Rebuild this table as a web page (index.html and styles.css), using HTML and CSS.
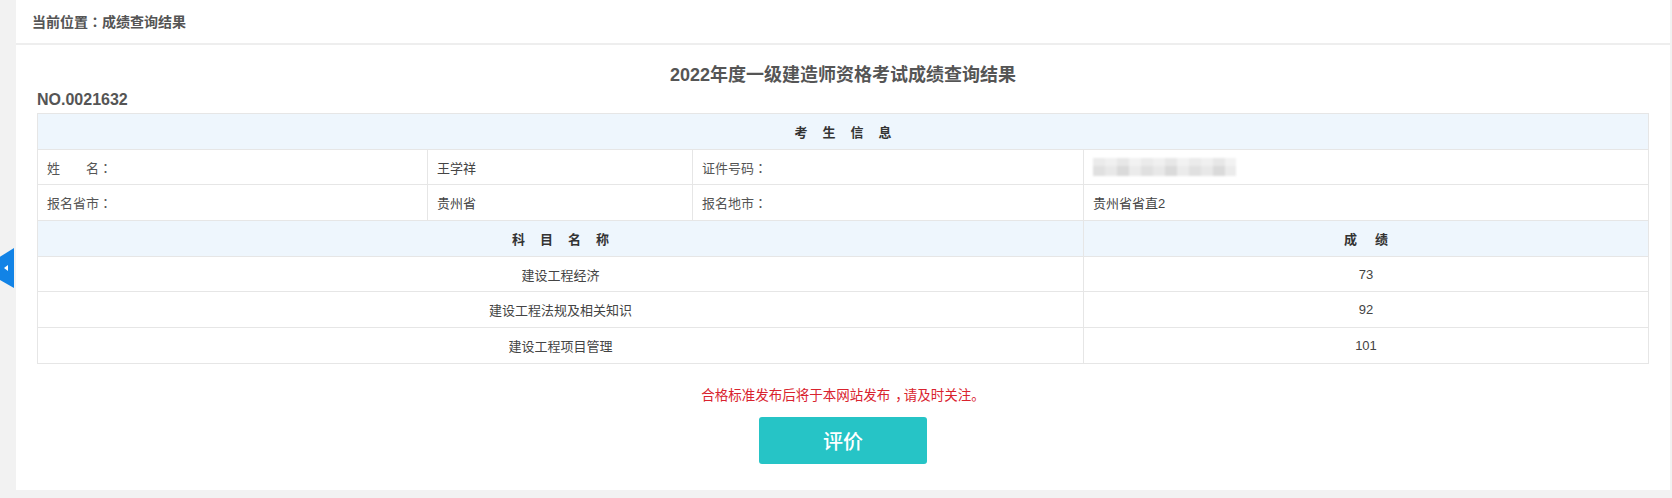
FILE: index.html
```html
<!DOCTYPE html>
<html lang="zh-CN">
<head>
<meta charset="utf-8">
<title>成绩查询结果</title>
<link rel="stylesheet" href="styles.css">
</head>
<body>
<div class="side-tab"><span class="side-arrow"></span></div>
<div class="panel">
  <div class="crumb">当前位置<span class="punct" lang="zh-TW">：</span>成绩查询结果</div>
  <div class="content">
    <h1 class="title">2022年度一级建造师资格考试成绩查询结果</h1>
    <div class="serial">NO.0021632</div>
    <table class="result">
      <colgroup>
        <col class="c1"><col class="c2"><col class="c3"><col class="c4">
      </colgroup>
      <tr class="head"><th colspan="4"><span class="spaced">考生信息</span></th></tr>
      <tr>
        <td class="label">姓&emsp;&emsp;名<span class="punct" lang="zh-TW">：</span></td>
        <td>王学祥</td>
        <td class="label">证件号码<span class="punct" lang="zh-TW">：</span></td>
        <td><span class="masked"></span></td>
      </tr>
      <tr>
        <td class="label">报名省市<span class="punct" lang="zh-TW">：</span></td>
        <td>贵州省</td>
        <td class="label">报名地市<span class="punct" lang="zh-TW">：</span></td>
        <td>贵州省省直2</td>
      </tr>
      <tr class="head">
        <th colspan="3"><span class="spaced">科目名称</span></th>
        <th><span class="spaced wide">成绩</span></th>
      </tr>
      <tr class="score"><td colspan="3">建设工程经济</td><td>73</td></tr>
      <tr class="score"><td colspan="3">建设工程法规及相关知识</td><td>92</td></tr>
      <tr class="score"><td colspan="3">建设工程项目管理</td><td>101</td></tr>
    </table>
    <p class="notice">合格标准发布后将于本网站发布<span class="comma">，</span>请及时关注。</p>
    <div class="actions"><button class="rate-btn" type="button">评价</button></div>
  </div>
</div>
</body>
</html>
```
FILE: styles.css
```css
html, body {
  margin: 0;
  padding: 0;
}
body {
  background: #f2f2f2;
  font-family: "Liberation Sans", "Noto Sans CJK SC", sans-serif;
  color: #444;
  width: 1672px;
  height: 498px;
  overflow: hidden;
  position: relative;
}
.punct {
  font-family: "Noto Sans CJK TC", "Noto Sans CJK SC", sans-serif;
}
.comma {
  padding-left: 5px;
  letter-spacing: -5px;
}
.panel {
  margin-left: 16px;
  width: 1654px;
  background: #fff;
  height: 490px;
  box-sizing: border-box;
}
.crumb {
  height: 43px;
  line-height: 43px;
  padding-left: 16px;
  font-size: 14px;
  font-weight: bold;
  color: #555;
  border-bottom: 2px solid #eeeeee;
  box-sizing: content-box;
}
.content {
  padding: 18px 21px 0 21px;
}
.title {
  margin: 0;
  text-align: center;
  font-size: 18px;
  line-height: 24px;
  font-weight: bold;
  color: #555;
}
.serial {
  margin-top: 3px;
  font-size: 16px;
  line-height: 20px;
  font-weight: bold;
  color: #555;
}
.result {
  width: 100%;
  table-layout: fixed;
  border-collapse: collapse;
  border: 1px solid #dcdcdc;
  font-size: 13px;
  color: #444;
  margin-top: 3px;
}
.c1 { width: 390px; }
.c2 { width: 265px; }
.c3 { width: 391px; }
.c4 { width: auto; }
.result tr { height: 35.7px; }
.result th,
.result td {
  border: 1px solid #e6e6e6;
  padding: 0 9px;
  vertical-align: middle;
  font-weight: normal;
}
.result .head th {
  background: #eef6fd;
  text-align: center;
  font-weight: bold;
  color: #333;
}
.spaced {
  letter-spacing: 15px;
  padding-left: 15px;
}
.spaced.wide {
  letter-spacing: 18px;
  padding-left: 18px;
}
.result .label {
  color: #555;
}
.score td {
  text-align: center;
}
.masked {
  display: inline-block;
  vertical-align: middle;
  width: 143px;
  height: 18px;
  background:
    linear-gradient(180deg, rgba(255,255,255,0.35) 0 45%, rgba(255,255,255,0) 45% 100%),
    repeating-linear-gradient(90deg, #e0e0e0 0 12px, #e8e8e8 12px 24px, #dadada 24px 36px, #ebebeb 36px 48px);
  filter: blur(1px);
}
.notice {
  margin: 22px 0 0 0;
  text-align: center;
  font-size: 13.5px;
  line-height: 20px;
  color: #d9232e;
}
.actions {
  margin-top: 11px;
  display: flex;
  justify-content: center;
}
.rate-btn {
  width: 168px;
  height: 47px;
  border: none;
  border-radius: 3px;
  background: #26c4c6;
  color: #fff;
  font-family: "Noto Sans CJK SC", sans-serif;
  font-size: 20px;
  font-weight: 500;
  padding: 0;
}
.side-tab {
  position: absolute;
  left: 0;
  top: 248px;
  width: 14px;
  height: 40px;
  background: #1283e6;
  clip-path: polygon(0 22%, 100% 0, 100% 100%, 0 80%);
  z-index: 2;
}
.side-arrow {
  position: absolute;
  left: 4px;
  top: 17px;
  width: 0;
  height: 0;
  border-top: 3px solid transparent;
  border-bottom: 3px solid transparent;
  border-right: 4px solid #fff;
}
```
